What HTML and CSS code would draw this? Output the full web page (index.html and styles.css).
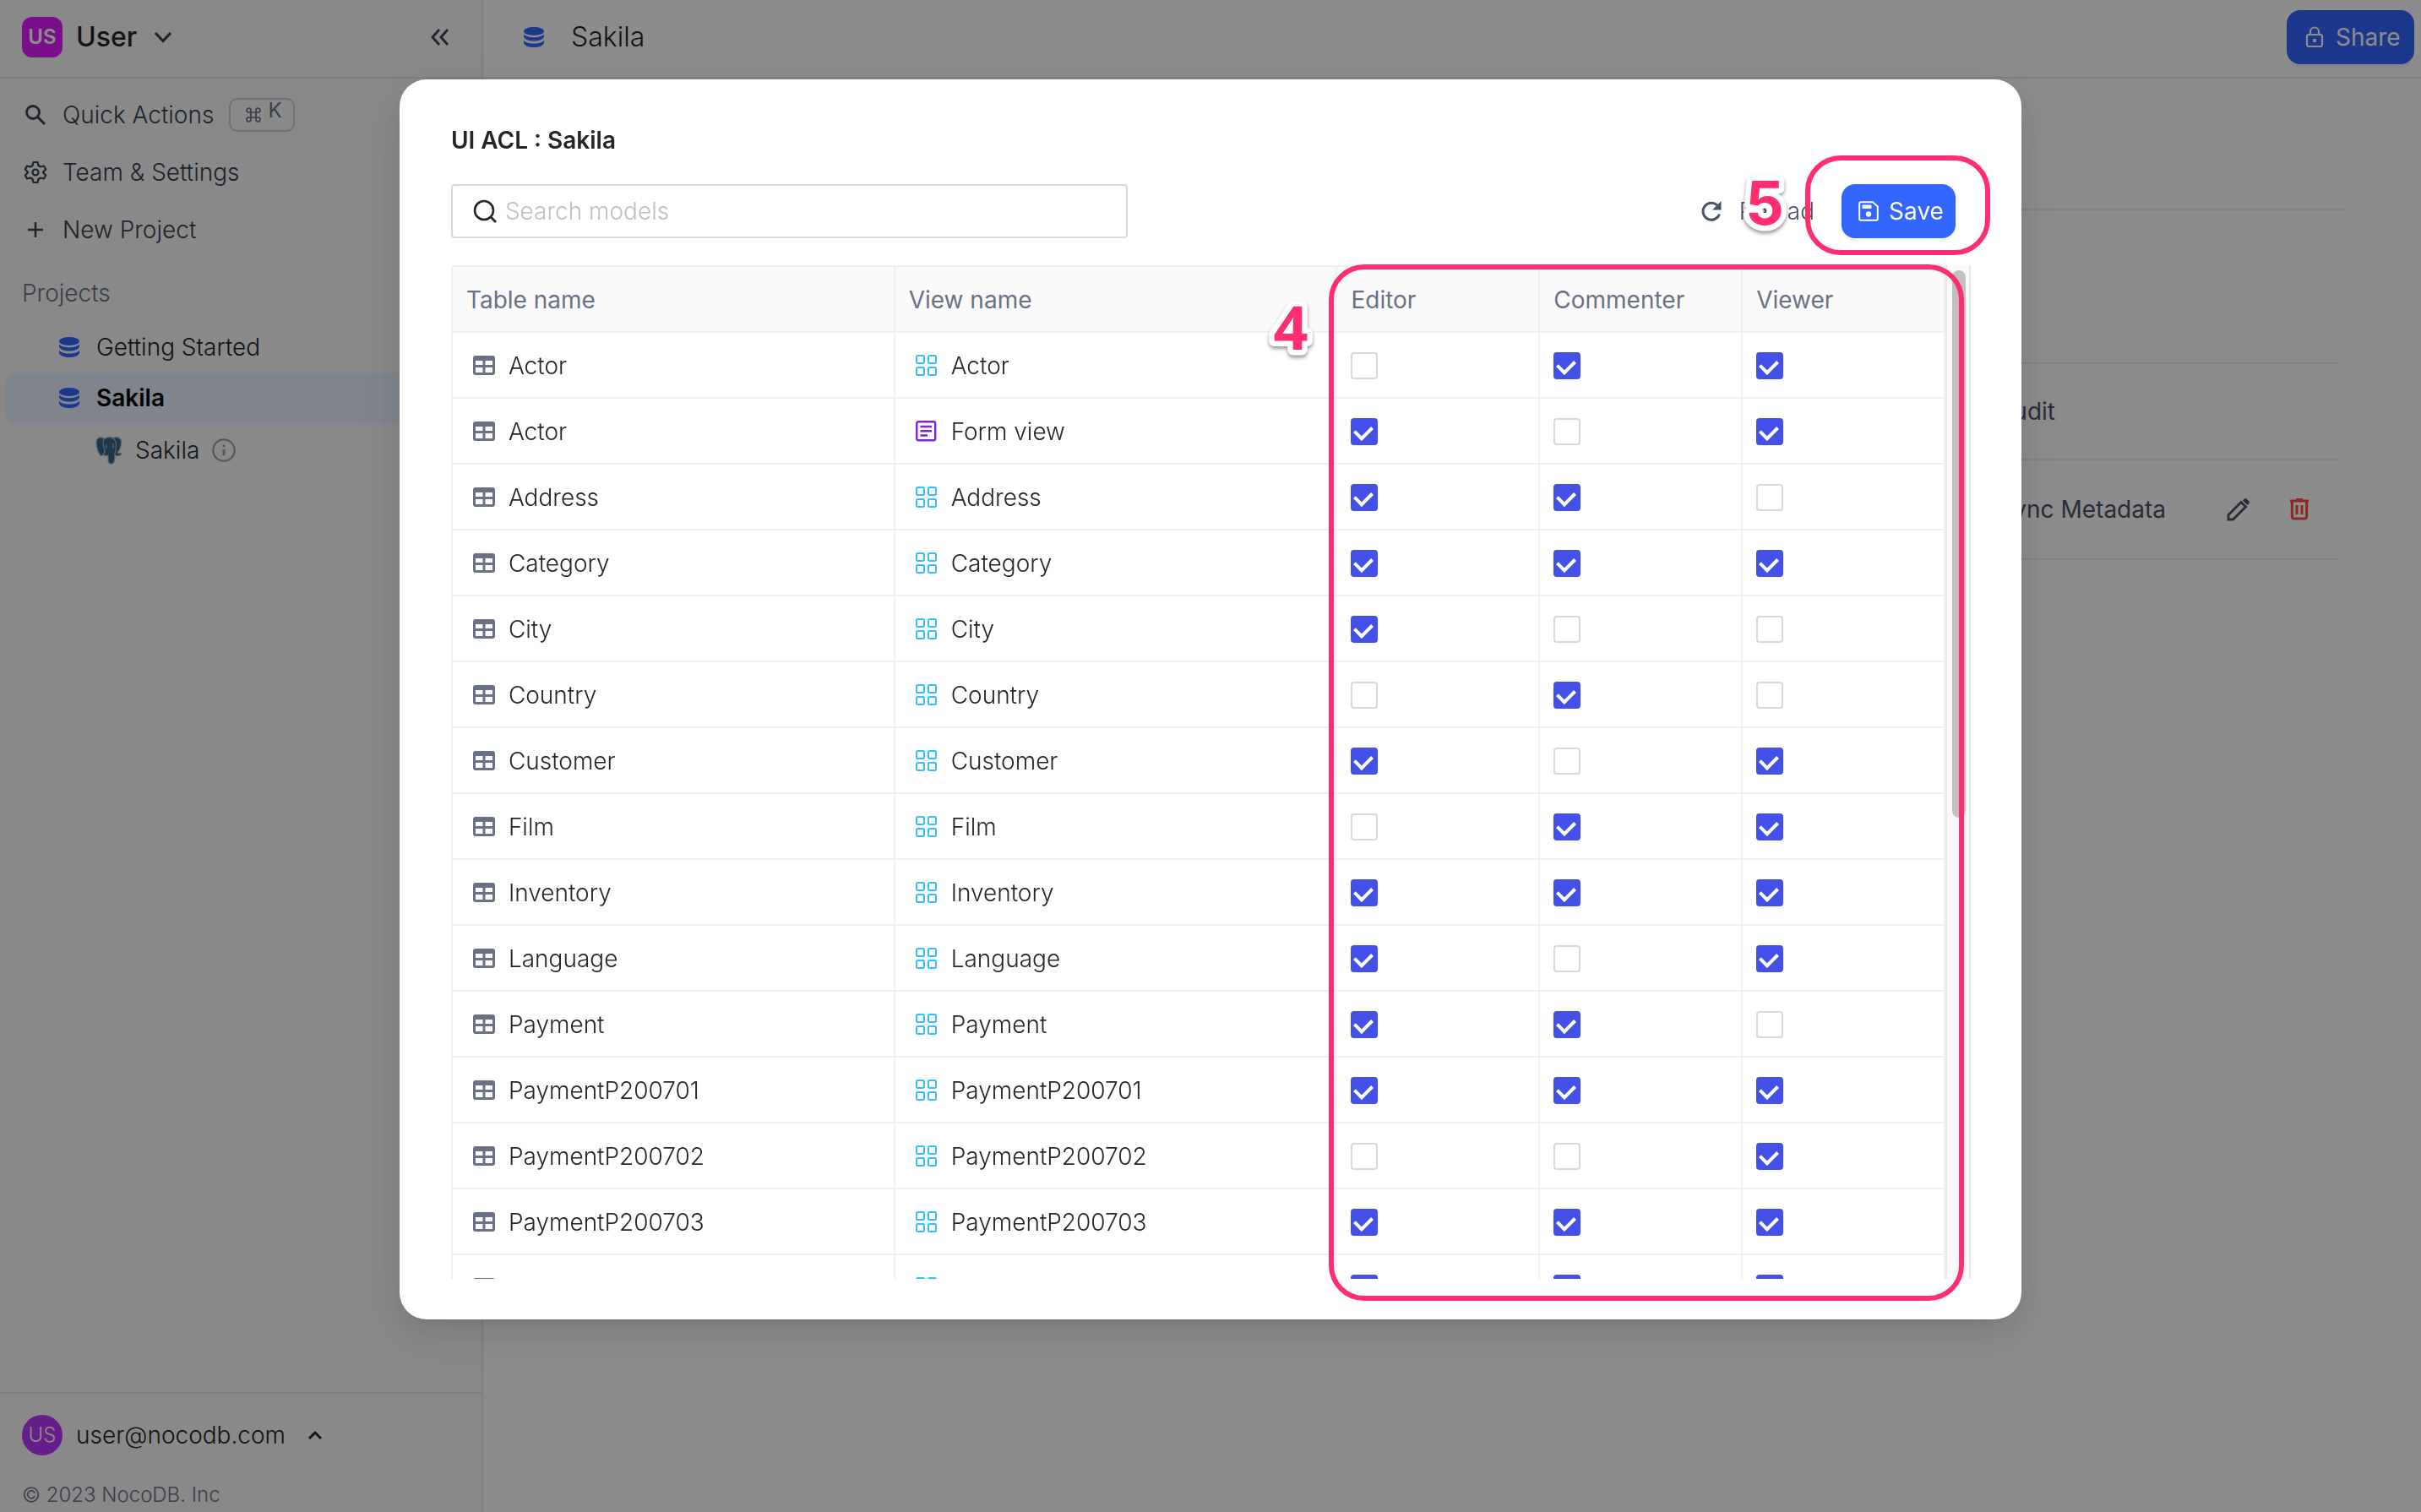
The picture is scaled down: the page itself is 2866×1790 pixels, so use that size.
FILE: index.html
```html
<!DOCTYPE html>
<html lang="en">
<head>
<meta charset="utf-8">
<title>Sakila - UI ACL</title>
<link rel="stylesheet" href="styles.css">
</head>
<body>
<svg class="sprite" aria-hidden="true">
  <symbol id="i-db" viewBox="0 0 24 24"><ellipse cx="12" cy="5" rx="12" ry="5"/><path d="M0 8.500C2 11 7 12.200 12 12.200S22 11 24 8.500V11.500C23 14.500 18 16.600 12 16.600S1 14.500 0 11.500ZM0 16C2 18.500 7 19.600 12 19.600S22 18.500 24 16V19C23 22 18 24 12 24S1 22 0 19Z"/></symbol>
  <symbol id="i-table" viewBox="0 0 26 26"><path fill-rule="evenodd" d="M3 1H23Q26 1 26 4V21Q26 24 23 24H3Q0 24 0 21V4Q0 1 3 1ZM3 7V12H11.500V7ZM14.500 7V12H23V7ZM3 15V21H11.500V15ZM14.500 15V21H23V15Z"/></symbol>
  <symbol id="i-grid" viewBox="0 0 26 26"><g fill="none" stroke="#36bfff" stroke-width="2"><rect x="1" y="1" width="9" height="9" rx="1.500"/><rect x="15" y="1" width="9" height="9" rx="1.500"/><rect x="1" y="15" width="9" height="9" rx="1.500"/><rect x="15" y="15" width="9" height="9" rx="1.500"/></g></symbol>
  <symbol id="i-form" viewBox="0 0 26 26"><g fill="none" stroke="#7d26cd" stroke-width="2.400"><rect x="1.200" y="1.200" width="22" height="22" rx="2"/><path d="M5.500 7H19M5.500 12.300H19M5.500 17.500H14"/></g></symbol>
</svg>

<div class="app">
  <aside class="sidebar">
    <header class="side-head">
      <span class="avatar square">US</span>
      <button class="workspace">User
        <svg width="22" height="14" viewBox="0 0 22 14"><path d="M2 2L11 11.500L20 2" fill="none" stroke="#374151" stroke-width="3.200"/></svg>
      </button>
      <button class="collapse" aria-label="Collapse sidebar">
        <svg width="22" height="20" viewBox="0 0 22 20"><path d="M10 1L2 10L10 19M20 1L12 10L20 19" fill="none" stroke="#374151" stroke-width="2.800"/></svg>
      </button>
    </header>
    <nav class="menu">
      <a href="#" class="item"><svg width="28" height="28" viewBox="0 0 28 28"><circle cx="11" cy="11" r="7.500" fill="none" stroke="#374151" stroke-width="2.800"/><path d="M16.500 16.500L25 25" stroke="#374151" stroke-width="3"/></svg>Quick Actions
        <kbd><svg width="18" height="18" viewBox="0 0 18 18"><path d="M6 6V3.500A2.500 2.500 0 1 0 3.500 6H14.500A2.500 2.500 0 1 0 12 3.500V14.500A2.500 2.500 0 1 0 14.500 12H3.500A2.500 2.500 0 1 0 6 14.500Z" fill="none" stroke="#6a7184" stroke-width="1.700"/></svg><span>K</span></kbd></a>
      <a href="#" class="item"><svg width="28" height="28" viewBox="0 0 28 28"><g fill="none" stroke="#374151" stroke-width="2.200" stroke-linejoin="round"><path d="M11.500 2H16.500L17.500 6L20 7.500L24 6.500L26.200 10.500L23.200 13.500V14.500L26.200 17.500L24 21.500L20 20.500L17.500 22L16.500 26H11.500L10.500 22L8 20.500L4 21.500L1.800 17.500L4.800 14.500V13.500L1.800 10.500L4 6.500L8 7.500L10.500 6Z"/><circle cx="14" cy="14" r="3.500"/></g></svg>Team &amp; Settings</a>
      <a href="#" class="item"><svg width="28" height="28" viewBox="0 0 28 28"><path d="M14 5V23M5 14H23" stroke="#374151" stroke-width="2.400"/></svg>New Project</a>
    </nav>
    <h2 class="group">Projects</h2>
    <nav class="tree">
      <a href="#" class="node"><svg class="db" width="24" height="24"><use href="#i-db"/></svg>Getting Started</a>
      <a href="#" class="node current"><svg class="db" width="24" height="24"><use href="#i-db"/></svg>Sakila</a>
      <a href="#" class="node child">
        <svg width="32" height="34" viewBox="0 0 32 34"><g fill="#336791" stroke="#a9b4bd" stroke-width="1.200" stroke-linejoin="round"><path d="M20 3C25 0 31 2 30.500 8C30 14 28 18 26 20C28 21 30 20 31 21.500C29 24 26 24 23 23Z"/><path d="M10 3C5 0 .500 3 1 9C1.500 15 4 22 6.500 23.500C8.500 24 10 21 11 20Z"/><path d="M10 4C14 .500 20 .500 23 5C26 10 24 17 23 21C22.500 25 24 32 19.500 33C16 33.500 15 31 15 28V23C12 24 9 23 9 21C12 21 11 18 10.500 15C9.500 11 8 7 10 4Z"/></g><path d="M13 10V15M21 9V15" stroke="#a9b4bd" stroke-width="1.200"/></svg>
        Sakila
        <svg width="28" height="28" viewBox="0 0 28 28"><circle cx="14" cy="14" r="12.700" fill="none" stroke="#9aa2af" stroke-width="2.200"/><path d="M14 13V20M14 7.500V10" stroke="#9aa2af" stroke-width="3"/></svg>
      </a>
    </nav>
    <footer class="side-foot">
      <button class="account"><span class="avatar round">US</span>user@nocodb.com
        <svg width="18" height="12" viewBox="0 0 18 12"><path d="M2 10L9 3L16 10" fill="none" stroke="#262626" stroke-width="3"/></svg>
      </button>
      <p class="copyright">© 2023 NocoDB. Inc</p>
    </footer>
  </aside>

  <main class="main">
    <header class="main-head">
      <svg class="db" width="24" height="24"><use href="#i-db"/></svg>
      <h1>Sakila</h1>
      <button class="btn share"><svg width="22" height="26" viewBox="0 0 22 26"><g fill="none" stroke="#fff" stroke-width="2.200"><rect x="2" y="10" width="18" height="14" rx="2"/><path d="M6 10V6.500A5 5 0 0 1 16 6.500V10"/></g><circle cx="11" cy="17" r="2.200" fill="#fff"/></svg>Share</button>
    </header>
    <div class="tabs"></div>
    <section class="sources">
      <div class="src-row head"></div>
      <div class="src-row audit"><a href="#">Audit</a></div>
      <div class="src-row sync"><a href="#">Sync Metadata</a>
        <button aria-label="Edit"><svg width="28" height="28" viewBox="0 0 28 28"><path d="M2 26V20.500L17 5.500L22.500 11L7.500 26Z" fill="none" stroke="#4a5268" stroke-width="2.800"/><path d="M19 3.500L21 1.500Q22.500 .500 24 2L26 4Q27.500 5.500 26.500 7L24.500 9Z" fill="#4a5268"/></svg></button>
        <button aria-label="Delete"><svg width="24" height="28" viewBox="0 0 24 28"><path d="M1 4H23M8 2.500H16" stroke="#ff4a3f" stroke-width="3"/><path d="M3.300 4V22Q3.300 25 6 25H18Q20.700 25 20.700 22V4M9 9V20M15 9V20" fill="none" stroke="#ff4a3f" stroke-width="3"/></svg></button>
      </div>
    </section>
  </main>
</div>

<div class="mask">
  <div class="modal" role="dialog" aria-labelledby="acl-title">
    <h2 class="title" id="acl-title">UI ACL : Sakila</h2>
    <div class="toolbar">
      <label class="search">
        <svg width="28" height="28" viewBox="0 0 28 28"><circle cx="13" cy="13" r="11" fill="none" stroke="#262626" stroke-width="2.600"/><path d="M20.500 20.500L27 27" stroke="#262626" stroke-width="2.800"/></svg>
        <input type="text" placeholder="Search models" aria-label="Search models">
      </label>
      <button class="reload"><svg width="26" height="26" viewBox="0 0 26 26"><path d="M22.500 16.500A10 10 0 1 1 20 6" fill="none" stroke="#4a5268" stroke-width="3"/><path d="M24.500 1V11.500H14Z" fill="#4a5268"/></svg>Reload</button>
      <button class="btn save"><svg width="24" height="24" viewBox="0 0 24 24"><path d="M3 1.200H17L22.800 6.500V21Q22.800 22.800 21 22.800H3Q1.200 22.800 1.200 21V3Q1.200 1.200 3 1.200Z" fill="none" stroke="#fff" stroke-width="2"/><rect x="4.500" y="4.500" width="11" height="4.500" rx="1" fill="#fff"/><circle cx="12" cy="15.500" r="3.200" fill="#fff"/></svg>Save</button>
    </div>
    <div class="grid-wrap">
      <table class="acl">
        <colgroup><col class="wide"><col class="wide"><col class="role"><col class="role"><col class="role"></colgroup>
        <thead><tr><th>Table name</th><th>View name</th><th>Editor</th><th>Commenter</th><th>Viewer</th></tr></thead>
        <tbody>
          <tr><td><span><svg><use href="#i-table"/></svg>Actor</span></td><td><span><svg><use href="#i-grid"/></svg>Actor</span></td><td><input type="checkbox" aria-label="Editor"></td><td><input type="checkbox" aria-label="Commenter" checked></td><td><input type="checkbox" aria-label="Viewer" checked></td></tr>
          <tr><td><span><svg><use href="#i-table"/></svg>Actor</span></td><td><span><svg><use href="#i-form"/></svg>Form view</span></td><td><input type="checkbox" aria-label="Editor" checked></td><td><input type="checkbox" aria-label="Commenter"></td><td><input type="checkbox" aria-label="Viewer" checked></td></tr>
          <tr><td><span><svg><use href="#i-table"/></svg>Address</span></td><td><span><svg><use href="#i-grid"/></svg>Address</span></td><td><input type="checkbox" aria-label="Editor" checked></td><td><input type="checkbox" aria-label="Commenter" checked></td><td><input type="checkbox" aria-label="Viewer"></td></tr>
          <tr><td><span><svg><use href="#i-table"/></svg>Category</span></td><td><span><svg><use href="#i-grid"/></svg>Category</span></td><td><input type="checkbox" aria-label="Editor" checked></td><td><input type="checkbox" aria-label="Commenter" checked></td><td><input type="checkbox" aria-label="Viewer" checked></td></tr>
          <tr><td><span><svg><use href="#i-table"/></svg>City</span></td><td><span><svg><use href="#i-grid"/></svg>City</span></td><td><input type="checkbox" aria-label="Editor" checked></td><td><input type="checkbox" aria-label="Commenter"></td><td><input type="checkbox" aria-label="Viewer"></td></tr>
          <tr><td><span><svg><use href="#i-table"/></svg>Country</span></td><td><span><svg><use href="#i-grid"/></svg>Country</span></td><td><input type="checkbox" aria-label="Editor"></td><td><input type="checkbox" aria-label="Commenter" checked></td><td><input type="checkbox" aria-label="Viewer"></td></tr>
          <tr><td><span><svg><use href="#i-table"/></svg>Customer</span></td><td><span><svg><use href="#i-grid"/></svg>Customer</span></td><td><input type="checkbox" aria-label="Editor" checked></td><td><input type="checkbox" aria-label="Commenter"></td><td><input type="checkbox" aria-label="Viewer" checked></td></tr>
          <tr><td><span><svg><use href="#i-table"/></svg>Film</span></td><td><span><svg><use href="#i-grid"/></svg>Film</span></td><td><input type="checkbox" aria-label="Editor"></td><td><input type="checkbox" aria-label="Commenter" checked></td><td><input type="checkbox" aria-label="Viewer" checked></td></tr>
          <tr><td><span><svg><use href="#i-table"/></svg>Inventory</span></td><td><span><svg><use href="#i-grid"/></svg>Inventory</span></td><td><input type="checkbox" aria-label="Editor" checked></td><td><input type="checkbox" aria-label="Commenter" checked></td><td><input type="checkbox" aria-label="Viewer" checked></td></tr>
          <tr><td><span><svg><use href="#i-table"/></svg>Language</span></td><td><span><svg><use href="#i-grid"/></svg>Language</span></td><td><input type="checkbox" aria-label="Editor" checked></td><td><input type="checkbox" aria-label="Commenter"></td><td><input type="checkbox" aria-label="Viewer" checked></td></tr>
          <tr><td><span><svg><use href="#i-table"/></svg>Payment</span></td><td><span><svg><use href="#i-grid"/></svg>Payment</span></td><td><input type="checkbox" aria-label="Editor" checked></td><td><input type="checkbox" aria-label="Commenter" checked></td><td><input type="checkbox" aria-label="Viewer"></td></tr>
          <tr><td><span><svg><use href="#i-table"/></svg>PaymentP200701</span></td><td><span><svg><use href="#i-grid"/></svg>PaymentP200701</span></td><td><input type="checkbox" aria-label="Editor" checked></td><td><input type="checkbox" aria-label="Commenter" checked></td><td><input type="checkbox" aria-label="Viewer" checked></td></tr>
          <tr><td><span><svg><use href="#i-table"/></svg>PaymentP200702</span></td><td><span><svg><use href="#i-grid"/></svg>PaymentP200702</span></td><td><input type="checkbox" aria-label="Editor"></td><td><input type="checkbox" aria-label="Commenter"></td><td><input type="checkbox" aria-label="Viewer" checked></td></tr>
          <tr><td><span><svg><use href="#i-table"/></svg>PaymentP200703</span></td><td><span><svg><use href="#i-grid"/></svg>PaymentP200703</span></td><td><input type="checkbox" aria-label="Editor" checked></td><td><input type="checkbox" aria-label="Commenter" checked></td><td><input type="checkbox" aria-label="Viewer" checked></td></tr>
          <tr><td><span><svg><use href="#i-table"/></svg></span></td><td><span><svg><use href="#i-grid"/></svg></span></td><td><input type="checkbox" aria-label="Editor" checked></td><td><input type="checkbox" aria-label="Commenter" checked></td><td><input type="checkbox" aria-label="Viewer" checked></td></tr>
        </tbody>
      </table>
      <div class="track"><div class="thumb"></div></div>
    </div>
    <div class="ring ring-roles"></div>
    <div class="ring ring-save"></div>
    <svg class="step step-roles" width="80" height="90"><text x="40" y="68">4</text></svg>
    <svg class="step step-save" width="80" height="90"><text x="40" y="68">5</text></svg>
  </div>
</div>
</body>
</html>
```
FILE: styles.css
```css
* { box-sizing: border-box; }
body {
  margin: 0;
  font: 300 28px/44px Inter, "Liberation Sans", sans-serif;
  color: #262626;
  background: #fff;
  overflow: hidden;
}
button { font: inherit; color: inherit; border: 0; background: none; padding: 0; cursor: pointer; display: flex; align-items: center; }
a { color: inherit; text-decoration: none; }
h1, h2, p { margin: 0; font: inherit; }
svg { flex: none; display: block; }
.sprite { position: absolute; width: 0; height: 0; }
.db { fill: #36f; }

.app { display: grid; grid-template-columns: 572px 1fr; height: 100vh; }

/* Sidebar */
.sidebar { display: flex; flex-direction: column; background: #f9f9fa; border-right: 2px solid #e7e7e9; color: #374151; }
.side-head { display: flex; align-items: center; height: 93px; padding: 0 38px 4px 26px; border-bottom: 2px solid #e7e7e9; }
.avatar { width: 48px; height: 48px; display: grid; place-items: center; color: #fff; font-size: 24px; }
.square { background: #df1cff; border-radius: 12px; font-weight: 600; }
.round { background: #b837fb; border-radius: 50%; }
.workspace { flex: 1; gap: 20px; margin-left: 16px; font-size: 32px; font-weight: 500; color: #262626; }
.menu { padding-top: 9px; }
.item { display: flex; align-items: center; gap: 18px; height: 68px; padding-left: 28px; }
kbd { display: flex; gap: 8px; width: 78px; height: 40px; padding: 10px 0 0 18px; border: 2px solid #cfcfd2; border-radius: 10px; font: 24px/24px Inter, sans-serif; color: #6a7184; }
kbd svg { margin-top: -1px; }
kbd span { margin-top: -9px; }
.group { padding: 19px 0 12px 26px; color: #6a7184; }
.node { display: flex; align-items: center; gap: 20px; height: 60px; padding-left: 70px; color: #262626; }
.current { margin-left: 6px; padding-left: 64px; background: #e9f1ff; border-radius: 12px 0 0 12px; font-weight: 600; color: #000; }
.child { height: 64px; padding-left: 113px; gap: 15px; color: #1f2937; }
.side-foot { margin-top: auto; height: 142px; border-top: 2px solid #e7e7e9; padding-left: 26px; }
.account { height: 98px; gap: 16px; color: #262626; }
.account svg { margin-left: 10px; }
.copyright { font-size: 24px; color: #6a7184; }

/* Main area behind the dialog */
.main-head { display: flex; align-items: center; height: 93px; padding: 0 8px 4px 48px; border-bottom: 2px solid #e7e7e9; }
.main-head h1 { margin-left: 32px; font-size: 32px; }
.btn { height: 64px; border-radius: 16px; background: #36f; color: #fff; box-shadow: 0 4px 0 rgba(0, 0, 0, .04); font-weight: 400; }
.share { width: 151px; margin-left: auto; padding-left: 22px; gap: 14px; }
.tabs { height: 156px; margin-right: 88px; border-bottom: 2px solid #eee; }
.sources { margin-right: 96px; color: #4a5268; font-weight: 400; }
.src-row { display: flex; align-items: center; justify-content: flex-end; height: 118px; border-bottom: 2px solid #eee; }
.head { height: 182px; }
.audit { height: 114px; padding-right: 337px; }
.sync { padding-right: 36px; }
.sync button { margin-left: 46px; }
.sync a { margin-right: 26px; }

/* Dialog */
.mask { position: fixed; inset: 0; padding-top: 94px; background: rgba(0, 0, 0, .45); display: flex; justify-content: center; align-items: flex-start; }
.modal {
  position: relative; display: flex; flex-direction: column;
  width: 67%; height: 82vh; padding: 50px 60px 48px 61px;
  background: #fff; border-radius: 32px;
  box-shadow: 0 6px 12px -8px rgba(0, 0, 0, .12), 0 12px 32px rgba(0, 0, 0, .08), 0 18px 56px 16px rgba(0, 0, 0, .05);
}
.title { font-weight: 600; }
.toolbar { display: flex; align-items: center; margin: 30px 18px 32px 0; }
.search { display: flex; align-items: center; gap: 10px; width: 45%; height: 64px; padding-left: 24px; border: 2px solid #d9d9d9; border-radius: 4px; }
.search input { flex: 1; min-width: 0; border: 0; outline: 0; padding: 0; font: inherit; background: none; }
.search input::placeholder { color: #bfbfbf; }
.reload { margin-left: auto; gap: 20px; color: #4a5268; }
.save { width: 135px; margin-left: 32px; padding-left: 20px; gap: 12px; }

.grid-wrap { flex: 1; min-height: 0; overflow: hidden; display: flex; align-items: flex-start; }
.acl { flex: 1; table-layout: fixed; border-spacing: 0; border-left: 2px solid #f0f0f0; border-top: 2px solid #f0f0f0; border-top-left-radius: 4px; }
.wide { width: 524px; }
.role { width: 240px; }
th, td { height: 78px; padding: 2px 0 0 16px; text-align: left; border-right: 2px solid #f0f0f0; border-bottom: 2px solid #f0f0f0; }
th { background: #fafafa; color: #6a7184; font-weight: 400; }
td span { display: flex; align-items: center; gap: 16px; padding-left: 8px; }
td svg { width: 26px; height: 26px; fill: #6a7184; }
td input {
  appearance: none; display: grid; place-items: center;
  width: 32px; height: 32px; margin: 0; border: 2px solid #d9d9d9; border-radius: 4px; background: #fff;
}
td input:checked { border-color: #4351e8; background: #4351e8; }
td input:checked::after { content: ""; width: 10px; height: 16px; margin: 0 2px 3px 0; border: solid #fff; border-width: 0 4px 4px 0; transform: rotate(45deg); }
.track { align-self: stretch; width: 30px; padding: 6px; border: solid #e8e8e8; border-width: 0 2px; background: #fafafa; }
.thumb { width: 16px; height: 648px; border-radius: 8px; background: #c1c1c1; }

/* Walkthrough marks laid over the dialog */
.ring { position: absolute; border: 6px solid #ff2e6e; border-radius: 42px; pointer-events: none; }
.ring-roles { left: 1100px; right: 68px; top: 219px; bottom: 22px; }
.ring-save { right: 37px; top: 90px; width: 219px; height: 118px; }
.step { position: absolute; overflow: visible; filter: drop-shadow(0 3px 2px rgba(0, 0, 0, .4)); }
.step text { font: 700 72px "Open Sans", sans-serif; text-anchor: middle; fill: #ff2e6e; stroke: #fff; stroke-width: 13px; stroke-linejoin: round; paint-order: stroke; }
.step-roles { left: 1015px; top: 252px; }
.step-save { left: 1576px; top: 104px; }
.step-save text { font-family: Inter, sans-serif; }
```
